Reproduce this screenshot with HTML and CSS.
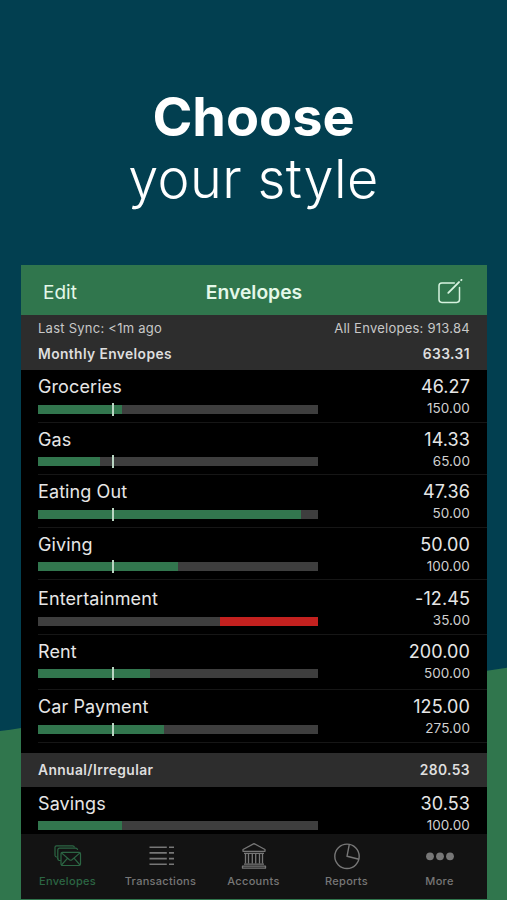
FILE: index.html
```html
<!DOCTYPE html>
<html lang="en">
<head>
    <meta charset="UTF-8">
    <meta name="viewport" content="width=device-width, initial-scale=1.0">
    <title>Envelopes</title>
    <link rel="stylesheet" href="styles.css">
</head>
<body>

    <!-- Green hill behind the phone -->
    <svg class="hill" viewBox="0 0 507 900">
        <path d="M0 731 Q10 730 21 728 L487 670.7 L507 667.7 V900 H0 Z" fill="#30764d"/>
    </svg>

    <h1 class="headline">
        <span class="headline-bold">Choose</span>
        <span class="headline-light">your style</span>
    </h1>

    <div class="phone">
        <!-- Navigation bar -->
        <div class="navbar">
            <a class="edit">Edit</a>
            <h2>Envelopes</h2>
            <svg class="compose" viewBox="0 0 26 26" fill="none" stroke="#d6f3df" stroke-width="1.5" stroke-linecap="round" stroke-linejoin="round">
                <path d="M17.3 4H4.8Q2 4 2 6.8V20.6Q2 23.4 4.8 23.4H19.7Q22.5 23.4 22.5 20.6V8.5"/>
                <path d="M11.3 13.8L22 3.1" stroke-width="1.9"/>
                <path d="M24.2 1.2L24.5 .9" stroke-width="1.8"/>
            </svg>
        </div>

        <div class="summary">
            <div class="sync"><span>Last Sync: &lt;1m ago</span><span>All Envelopes: 913.84</span></div>
            <div class="group"><span>Monthly Envelopes</span><span>633.31</span></div>
        </div>

        <!-- Monthly envelopes -->
        <div class="row">
            <div class="name">Groceries</div>
            <div class="amount">46.27</div>
            <div class="bar"><div class="fill" style="width: 30%"></div><div class="marker"></div></div>
            <div class="budget">150.00</div>
        </div>
        <div class="row">
            <div class="name">Gas</div>
            <div class="amount">14.33</div>
            <div class="bar"><div class="fill" style="width: 22%"></div><div class="marker"></div></div>
            <div class="budget">65.00</div>
        </div>
        <div class="row">
            <div class="name">Eating Out</div>
            <div class="amount">47.36</div>
            <div class="bar"><div class="fill" style="width: 94%"></div><div class="marker"></div></div>
            <div class="budget">50.00</div>
        </div>
        <div class="row">
            <div class="name">Giving</div>
            <div class="amount">50.00</div>
            <div class="bar"><div class="fill" style="width: 50%"></div><div class="marker"></div></div>
            <div class="budget">100.00</div>
        </div>
        <div class="row row-over">
            <div class="name">Entertainment</div>
            <div class="amount">-12.45</div>
            <div class="bar"><div class="fill over" style="width: 35%"></div></div>
            <div class="budget">35.00</div>
        </div>
        <div class="row row-rent">
            <div class="name">Rent</div>
            <div class="amount">200.00</div>
            <div class="bar"><div class="fill" style="width: 40%"></div><div class="marker"></div></div>
            <div class="budget">500.00</div>
        </div>
        <div class="row row-car">
            <div class="name">Car Payment</div>
            <div class="amount">125.00</div>
            <div class="bar"><div class="fill" style="width: 45%"></div><div class="marker"></div></div>
            <div class="budget">275.00</div>
        </div>

        <!-- Annual envelopes -->
        <div class="group group-annual"><span>Annual/Irregular</span><span>280.53</span></div>
        <div class="row row-last">
            <div class="name">Savings</div>
            <div class="amount">30.53</div>
            <div class="bar"><div class="fill" style="width: 30%"></div></div>
            <div class="budget">100.00</div>
        </div>

        <!-- Tab bar -->
        <div class="tabs">
            <div class="tab active">
                <svg viewBox="0 0 30 28" fill="none" stroke="currentColor" stroke-width="1.2" stroke-linejoin="round">
                    <path d="M7.8 18.5H6.3Q5 18.5 4.8 17.2L4.7 16M4.6 15H3.5Q2.3 15 2 13.5V5.3Q2 3.8 3.5 3.8H19.5Q21.2 3.8 21.5 5.4"/>
                    <path d="M4.8 17V8.2Q4.8 6.2 6.6 6.2H22.5Q24.3 6.2 24.6 8"/>
                    <rect x="8" y="10.3" width="19.5" height="13.2" rx="1.4"/>
                    <path d="M8.5 10.9L16.4 17.8Q17.7 18.7 19 17.8L27 10.9M8.5 23L14.4 16.4M27 23L21.2 16.4"/>
                </svg>
                <span>Envelopes</span>
            </div>
            <div class="tab">
                <svg viewBox="0 0 30 28" fill="none" stroke="currentColor" stroke-width="1.6">
                    <path d="M3.5 5.2H20.8M3.5 10.9H20.8M3.5 16.6H20.8M3.5 22.3H20.8"/>
                    <path d="M23 5.2H28M23 10.9H28M23 16.6H28M23 22.3H28"/>
                </svg>
                <span>Transactions</span>
            </div>
            <div class="tab">
                <svg viewBox="0 0 30 28" fill="none" stroke="currentColor" stroke-width="1.3" stroke-linejoin="round">
                    <path d="M4 9.3V7.5L15 1.6L26 7.5V9.3Z"/>
                    <path d="M5 11.3H25M6.5 12V21.5M9.5 12V21.5M13.3 12V21.5M16.7 12V21.5M20.5 12V21.5M23.5 12V21.5"/>
                    <path d="M5 22.2H25M3.5 24.2H26.5V26.2H3.5Z"/>
                </svg>
                <span>Accounts</span>
            </div>
            <div class="tab">
                <svg viewBox="0 0 30 28" fill="none" stroke="currentColor" stroke-width="1.4" stroke-linejoin="round">
                    <circle cx="15" cy="14.3" r="12.2"/>
                    <path d="M17.3 2.3L15 14.3L27 17.2"/>
                </svg>
                <span>Reports</span>
            </div>
            <div class="tab">
                <svg viewBox="0 0 30 28" fill="currentColor">
                    <circle cx="5" cy="14.3" r="3.9"/>
                    <circle cx="15" cy="14.3" r="3.9"/>
                    <circle cx="25" cy="14.3" r="3.9"/>
                </svg>
                <span>More</span>
            </div>
        </div>
    </div>

</body>
</html>
```
FILE: styles.css
```css
* {
    box-sizing: border-box;
}

body {
    margin: 0;
    height: 900px;
    overflow: hidden;
    background-color: #023f50;
    font-family: Inter, "Liberation Sans", sans-serif;
    color: #e6e6e6;
}

.hill {
    position: absolute;
    top: 0;
    left: 0;
    width: 507px;
    height: 900px;
    z-index: -1;
}

.headline {
    margin: 0;
    height: 264.5px;
    padding-top: 86px;
    display: flex;
    flex-direction: column;
    align-items: center;
    font-size: 54px;
    line-height: 62px;
    color: #fff;
}

.headline-bold {
    font-weight: 700;
}

.headline-light {
    font-weight: 350;
    letter-spacing: .4px;
}

.phone {
    width: 466px;
    height: 634.5px;
    margin-left: 21px;
    background-color: #000;
}

.navbar {
    height: 50px;
    padding: 5px 24px 0 22px;
    display: grid;
    grid-template-columns: 1fr auto 1fr;
    align-items: center;
    background-color: #30764d;
    color: #e4f8e9;
}

.navbar h2 {
    margin: 0 -1px 0 1px;
    font-size: 19.3px;
    font-weight: 600;
}

.edit {
    font-size: 19px;
}

.compose {
    width: 26px;
    height: 26px;
    justify-self: end;
    margin-bottom: 1px;
}

.summary {
    height: 55.5px;
    background-color: #2d2d2d;
}

.sync,
.group {
    display: flex;
    justify-content: space-between;
    padding: 0 17px;
}

.sync {
    height: 26px;
    line-height: 26px;
    font-size: 13px;
    letter-spacing: .25px;
    color: #c8c8c8;
}

.group {
    height: 27px;
    line-height: 27px;
    font-size: 13.8px;
    font-weight: 600;
    letter-spacing: .4px;
    color: #dedede;
}

.group-annual {
    height: 33.5px;
    line-height: 34px;
    margin-top: 10px;
    background-color: #2d2d2d;
}

.row {
    height: 52.5px;
    margin-left: 17px;
    padding: 5px 17px 0 0;
    display: grid;
    grid-template-columns: 280px 1fr;
    grid-template-rows: 23px 20px;
    row-gap: 1px;
    align-content: start;
    border-bottom: 1px solid #161616;
}

.row-over {
    height: 54.5px;
    padding-top: 7px;
}

.row-rent {
    height: 55.5px;
}

.row-car {
    height: 53px;
}

.row-last {
    height: 47.5px;
    border-bottom: none;
}

.name,
.amount {
    font-size: 18px;
    line-height: 23px;
    letter-spacing: .1px;
}

.amount,
.budget {
    text-align: right;
}

.budget {
    font-size: 13.5px;
    line-height: 19px;
    letter-spacing: .1px;
    color: #d0d0d0;
}

.bar {
    position: relative;
    align-self: center;
    height: 9px;
    background-color: #3e3e3e;
}

.fill {
    height: 9px;
    background-color: #32764e;
}

.over {
    margin-left: auto;
    background-color: #c3211f;
}

.marker {
    position: absolute;
    left: 74px;
    top: -2px;
    width: 2px;
    height: 13px;
    background-color: #b9d5c2;
}

.tabs {
    height: 65px;
    padding: 8px 1px 0 0;
    display: grid;
    grid-template-columns: repeat(5, 1fr);
    background-color: #131313;
}

.tab {
    display: flex;
    flex-direction: column;
    align-items: center;
    gap: 4px;
    font-size: 11px;
    font-weight: 500;
    letter-spacing: .3px;
    line-height: 14px;
    color: #777;
}

.tab svg {
    width: 30px;
    height: 28px;
}

.active {
    color: #2c6644;
}
```
